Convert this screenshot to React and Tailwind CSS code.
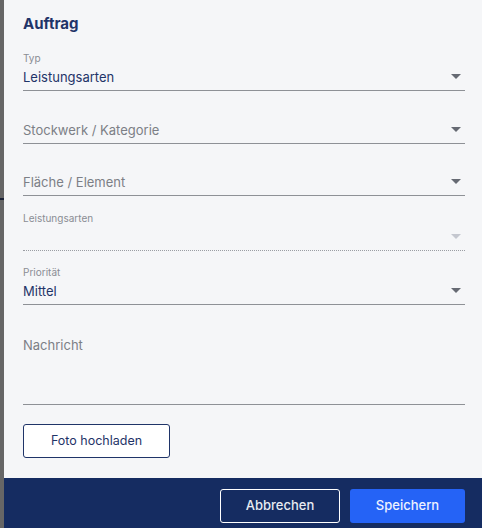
import React from 'react';

const Arrow = ({ light }) => (
  <svg width="10" height="6" viewBox="0 0 10 6" className={light ? 'text-[#c4c7cf]' : 'text-[#666a73]'}>
    <path d="M0 0h10L5 5z" fill="currentColor" />
  </svg>
);

const SelectField = ({ label, value, placeholder, disabled, className = '' }) => (
  <div className={`flex flex-col ${className}`}>
    <div className="h-[12px] text-[10px] leading-[12px] text-[#8a8d94]">{label}</div>
    <div
      className={`flex items-center justify-between h-[27px] pr-[4px] border-b ${
        disabled ? 'border-dotted border-[#9a9da3]' : 'border-[#8e9196]'
      }`}
    >
      <span className={`text-[13px] leading-[18px] ${value ? 'text-[#1f3468]' : 'text-[#7c7f86]'}`}>
        {value || placeholder}
      </span>
      <Arrow light={disabled} />
    </div>
  </div>
);

export default function App() {
  return (
    <div className="flex h-[528px] w-[482px] bg-[#666666]" style={{ fontFamily: 'Inter, "Noto Sans", sans-serif' }}>
      <div className="w-[4px] flex flex-col">
        <div className="h-[198px]" />
        <div className="h-[2px] bg-[#1b2236]" />
      </div>
      <div className="flex-1 flex flex-col bg-[#f5f6f8]">
        <div className="flex-1 flex flex-col pl-[19px] pr-[17px] pt-[14px]">
          <h2 className="text-[15px] font-bold text-[#1f3468] leading-[20px]">Auftrag</h2>
          <div className="mt-[18px] flex flex-col">
            <SelectField label="Typ" value="Leistungsarten" />
            <SelectField placeholder="Stockwerk / Kategorie" className="mt-[14px]" />
            <SelectField placeholder="Fläche / Element" className="mt-[13px]" />
            <SelectField label="Leistungsarten" disabled className="mt-[16px]" />
            <SelectField label="Priorität" value="Mittel" className="mt-[15px]" />
          </div>
          <div className="mt-[30px] h-[70px] border-b border-[#8e9196] text-[13px] leading-[20px] text-[#7c7f86]">
            Nachricht
          </div>
          <button className="mt-[19px] w-[147px] h-[34px] rounded-[3px] border border-[#1f3468] text-[12.5px] text-[#1f3468] bg-white">
            Foto hochladen
          </button>
        </div>
        <div className="h-[50px] bg-[#152c61] flex items-start justify-end gap-[10px] pr-[17px] pt-[11px]">
          <button className="w-[120px] h-[34px] rounded-[3px] border border-white text-[13px] font-medium text-[#e8ebf2]">
            Abbrechen
          </button>
          <button className="w-[115px] h-[34px] rounded-[3px] bg-[#2563f6] text-[13px] font-medium text-[#eef2ff]">
            Speichern
          </button>
        </div>
      </div>
    </div>
  );
}
